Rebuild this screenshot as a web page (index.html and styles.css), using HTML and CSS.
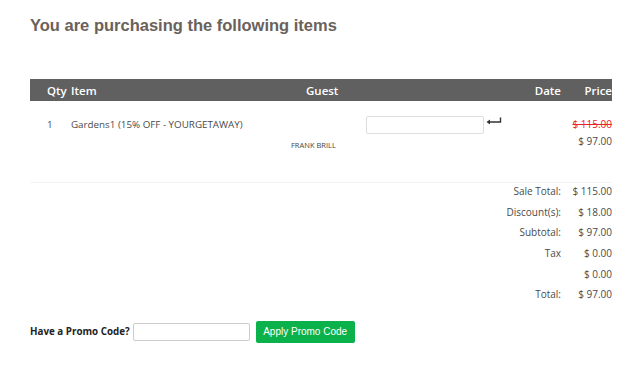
FILE: index.html
```
<!DOCTYPE html>
<html>
<head>
<meta charset="utf-8">
<link rel="stylesheet" href="styles.css">
</head>
<body>
<div class="page">
  <h1 class="title">You are purchasing the following items</h1>
  <div class="cart">
    <div class="head">
      <span class="c-qty">Qty</span>
      <span class="c-item">Item</span>
      <span class="c-guest">Guest</span>
      <span class="c-date">Date</span>
      <span class="c-price">Price</span>
    </div>
    <div class="row">
      <div class="c-qty">1</div>
      <div class="c-item">Gardens1 (15% OFF - YOURGETAWAY)</div>
      <div class="c-guest"><span class="guest-name">FRANK BRILL</span></div>
      <div class="c-date">
        <input class="date-input" type="text">
        <svg class="enter" width="16" height="8" viewBox="0 0 16 8"><path d="M14.5 0.5 V5 H3" fill="none" stroke="#333" stroke-width="1.4"/><path d="M0.5 5 L4 2.5 V7.5 Z" fill="#333"/></svg>
      </div>
      <div class="c-price">
        <div class="old">$ 115.00</div>
        <div class="new">$ 97.00</div>
      </div>
    </div>
    <div class="totals">
      <div class="t-row"><span class="t-label">Sale Total:</span><span class="t-val">$ 115.00</span></div>
      <div class="t-row"><span class="t-label">Discount(s):</span><span class="t-val">$ 18.00</span></div>
      <div class="t-row"><span class="t-label">Subtotal:</span><span class="t-val">$ 97.00</span></div>
      <div class="t-row"><span class="t-label">Tax</span><span class="t-val">$ 0.00</span></div>
      <div class="t-row"><span class="t-label"></span><span class="t-val">$ 0.00</span></div>
      <div class="t-row"><span class="t-label">Total:</span><span class="t-val">$ 97.00</span></div>
    </div>
  </div>
  <div class="promo">
    <label class="promo-label">Have a Promo Code?</label>
    <input class="promo-input" type="text">
    <button class="promo-btn">Apply Promo Code</button>
  </div>
</div>
</body>
</html>
```
FILE: styles.css
```
html, body { margin: 0; padding: 0; background: #fff; }
body { font-family: "Open Sans", sans-serif; color: #4a4a4a; }
.page { padding: 14px 0 0 30px; }
.title {
  margin: 0;
  font-family: "Liberation Sans", Arial, sans-serif;
  font-weight: bold;
  font-size: 16.5px;
  line-height: 22px;
  color: #6a615b;
}
.cart { width: 582px; margin-top: 43px; overflow: hidden; }
.head {
  display: flex;
  align-items: center;
  height: 22px;
  background: #606060;
  color: #fff;
  font-weight: 600;
  font-size: 11.5px;
}
.c-qty { width: 41px; padding-left: 17px; box-sizing: border-box; flex: none; }
.c-item { width: 220px; flex: none; }
.c-guest { width: 75px; flex: none; }
.c-date { width: 195px; text-align: right; flex: none; }
.c-price { width: 51px; text-align: right; flex: none; }
.head .c-guest { padding-left: 15px; box-sizing: border-box; }
.row {
  display: flex;
  align-items: flex-start;
  font-size: 9.8px;
  padding-top: 15px;
  height: 66px;
  border-bottom: 1px solid #f3f3f3;
}
.row .c-qty, .row .c-item { line-height: 17px; }
.row .c-guest { padding-top: 22px; line-height: 14px; }
.guest-name { font-size: 7.5px; color: #444; }
.row .c-date { display: flex; align-items: flex-start; }
.date-input {
  width: 118px;
  height: 18px;
  box-sizing: border-box;
  border: 1px solid #ddd;
  border-radius: 2px;
  margin: 0;
  padding: 0;
}
.enter { margin: 1px 0 0 2px; }
.row .c-price { line-height: 17px; font-size: 10px; }
.old { color: #e8212a; text-decoration: line-through; }
.totals { font-size: 10px; margin-top: -2px; }
.t-row { display: flex; justify-content: flex-end; height: 20.6px; align-items: center; white-space: nowrap; }
.t-label { text-align: right; padding-right: 11px; }
.t-val { width: 40px; flex: none; text-align: right; }
.promo {
  display: flex;
  align-items: center;
  margin-top: 16px;
  font-size: 9.8px;
}
.promo-label { font-weight: bold; color: #222; margin-right: 3px; }
.promo-input {
  width: 117px;
  height: 18px;
  box-sizing: border-box;
  border: 1px solid #ccc;
  border-radius: 2px;
  padding: 0;
  margin: 0;
}
.promo-btn {
  margin-left: 6px;
  width: 99px;
  height: 22px;
  background: #0bb14a;
  color: #fff;
  border: none;
  border-radius: 2px;
  font-family: "Liberation Sans", Arial, sans-serif;
  font-size: 10px;
  padding: 0;
}
```
